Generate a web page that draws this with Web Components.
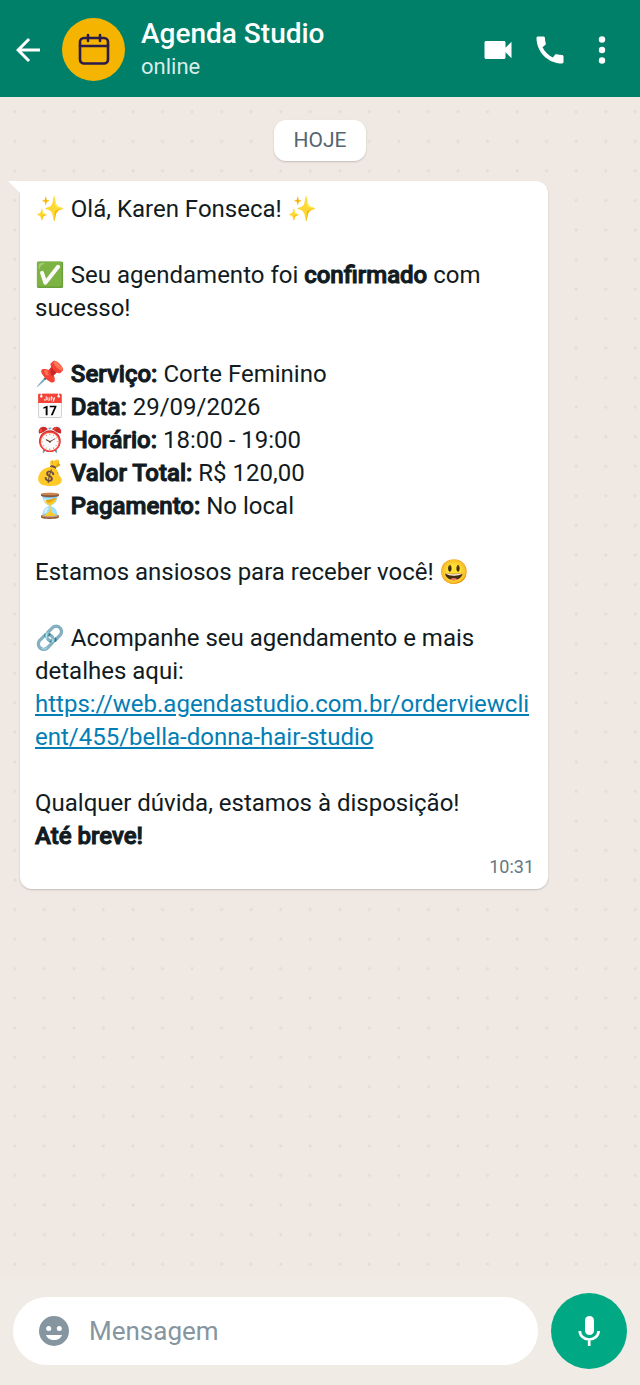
<!DOCTYPE html>
<html lang="pt-BR">
<head>
<meta charset="utf-8">
<meta name="viewport" content="width=device-width, initial-scale=1">
<title>Agenda Studio</title>
<style>
html, body { margin: 0; min-height: 100%; }
body { font-family: Roboto, "Noto Color Emoji", sans-serif; color: #111b21; background: #efeae2; }
chat-message a { color: #027eb5; text-decoration: underline; }
chat-message b { font-weight: 500; -webkit-text-stroke: 1px currentColor; }
</style>
</head>
<body>
<chat-app>
  <chat-header slot="header" name="Agenda Studio" status="online"></chat-header>
  <day-chip>HOJE</day-chip>
  <chat-message time="10:31">
    <p>✨ Olá, Karen Fonseca! ✨</p>
    <p>✅ Seu agendamento foi <b>confirmado</b> com sucesso!</p>
    <p>📌 <b>Serviço:</b> Corte Feminino<br>
    📅 <b>Data:</b> 29/09/2026<br>
    ⏰ <b>Horário:</b> 18:00 - 19:00<br>
    💰 <b>Valor Total:</b> R$ 120,00<br>
    ⏳ <b>Pagamento:</b> No local</p>
    <p>Estamos ansiosos para receber você! 😃</p>
    <p>🔗 Acompanhe seu agendamento e mais detalhes aqui:<br>
    <a href="https://web.agendastudio.com.br/orderviewclient/455/bella-donna-hair-studio">https://web.agendastudio.com.br/orderviewclient/455/bella-donna-hair-studio</a></p>
    <p>Qualquer dúvida, estamos à disposição!<br>
    <b>Até breve!</b></p>
  </chat-message>
  <chat-composer slot="footer"></chat-composer>
</chat-app>

<script>
function define(name, html, setup) {
  customElements.define(name, class extends HTMLElement {
    constructor() {
      super();
      this.attachShadow({ mode: "open" }).innerHTML = html;
    }
    connectedCallback() { if (setup) setup(this, this.shadowRoot); }
  });
}

define("chat-app", `
<style>
:host { display: flex; flex-direction: column; min-height: 100vh; }
main {
  --cell: 4.617vw;
  flex: 1; display: flex; flex-direction: column; align-items: flex-start;
  padding: 23px 20px; gap: 20px; background-color: #f0e9e3;
  background-image: radial-gradient(circle at center, #e0dcd6 1px, transparent 2px);
  background-size: var(--cell) var(--cell);
}
</style>
<slot name="header"></slot>
<main><slot></slot></main>
<slot name="footer"></slot>`);

define("chat-header", `
<style>
:host { display: block; }
header {
  display: flex; align-items: center; box-sizing: border-box; height: 97px;
  padding: 2px 20px 0 10px; background: #008069; color: #fff;
}
button { display: flex; align-items: center; justify-content: center; width: 36px; height: 48px; padding: 0; border: 0; background: none; color: inherit; }
.avatar { display: flex; align-items: center; justify-content: center; flex: none; width: 63px; height: 63px; margin: 0 16px; border-radius: 50%; background: #f5b400; }
.who { flex: 1; min-width: 0; }
h1 { margin: 0; font-size: 28px; line-height: 34px; font-weight: 500; }
.who p { margin: 0; font-size: 22px; line-height: 32px; color: #d9ece9; }
nav { display: flex; gap: 16px; }
svg { display: block; }
</style>
<header>
  <button aria-label="Voltar"><svg width="36" height="36" viewBox="0 0 24 24" fill="currentColor"><path d="M20 11H7.83l5.59-5.59L12 4l-8 8 8 8 1.41-1.41L7.83 13H20z"/></svg></button>
  <span class="avatar"><svg width="32" height="34" viewBox="0 0 32 34" fill="none" stroke="#2b1b4b" stroke-width="2.600" stroke-linecap="round" stroke-linejoin="round"><rect x="2" y="5" width="28" height="25.500" rx="4"/><path d="M2 13h28M10 2v6M22 2v6"/></svg></span>
  <div class="who"><h1></h1><p></p></div>
  <nav>
    <button aria-label="Chamada de vídeo"><svg width="36" height="36" viewBox="0 0 24 24" fill="currentColor"><path d="M17 10.500V7c0-.55-.45-1-1-1H4c-.55 0-1 .45-1 1v10c0 .55.45 1 1 1h12c.55 0 1-.45 1-1v-3.500l4 4v-11z"/></svg></button>
    <button aria-label="Chamada de voz"><svg width="36" height="36" viewBox="0 0 24 24" fill="currentColor"><path d="M20.010 15.380c-1.230 0-2.420-.2-3.530-.56-.35-.12-.74-.03-1.010.24l-1.570 1.970c-2.830-1.350-5.480-3.900-6.890-6.830l1.950-1.660c.27-.28.35-.67.24-1.020-.37-1.110-.56-2.300-.56-3.530 0-.54-.45-.99-.99-.99H4.190C3.650 3 3 3.240 3 3.990 3 13.280 10.730 21 20.010 21c.71 0 .99-.63.99-1.180v-3.450c0-.54-.45-.99-.99-.99z"/></svg></button>
    <button aria-label="Mais opções"><svg width="36" height="36" viewBox="0 0 36 36" fill="currentColor"><circle cx="18" cy="7.500" r="3.200"/><circle cx="18" cy="18" r="3.200"/><circle cx="18" cy="28.500" r="3.200"/></svg></button>
  </nav>
</header>`, (host, root) => {
  root.querySelector("h1").textContent = host.getAttribute("name");
  root.querySelector("p").textContent = host.getAttribute("status");
});

define("day-chip", `
<style>
:host { display: block; align-self: center; padding: 6px 20px; border-radius: 12px; background: #fff; color: #54656f; font-size: 21px; line-height: 29px; box-shadow: 0 1px 2px #0b141a33; }
</style><slot></slot>`);

define("chat-message", `
<style>
:host { display: block; position: relative; box-sizing: border-box; width: 88%; padding: 12px 14px 8px 15px; border-radius: 0 12px 12px 12px; background: #fff; box-shadow: 0 1px 2px #0b141a33; }
.tail { position: absolute; top: 0; left: -12px; width: 12px; height: 12px; background: #fff; clip-path: polygon(0 0, 100% 0, 100% 100%); }
.body { display: flex; flex-direction: column; gap: 33px; font-size: 24px; line-height: 33px; overflow-wrap: anywhere; }
::slotted(p) { margin: 0; }
time { display: block; text-align: right; font-size: 18px; line-height: 28px; color: #667781; }
</style>
<span class="tail"></span>
<div class="body"><slot></slot></div>
<time></time>`, (host, root) => {
  root.querySelector("time").textContent = host.getAttribute("time");
});

define("chat-composer", `
<style>
:host { display: block; background: #f0ebe4; }
form { display: flex; align-items: center; gap: 13px; padding: 16px 13px; }
label { flex: 1; min-width: 0; display: flex; align-items: center; gap: 17px; box-sizing: border-box; height: 68px; padding: 0 24px 0 23px; border-radius: 34px; background: #fff; }
svg { display: block; flex: none; }
input { flex: 1; min-width: 0; padding: 0; border: 0; outline: 0; background: none; font: 26px/34px Roboto, sans-serif; color: #111b21; }
input::placeholder { color: #8696a0; opacity: 1; }
button { display: flex; align-items: center; justify-content: center; flex: none; width: 76px; height: 76px; padding: 0; border: 0; border-radius: 50%; background: #00a884; color: #fff; }
</style>
<form>
  <label>
    <svg width="36" height="36" viewBox="0 0 36 36"><circle cx="18" cy="18" r="15" fill="#8696a0"/><circle cx="12.700" cy="15.500" r="2.500" fill="#fff"/><circle cx="23.300" cy="15.500" r="2.500" fill="#fff"/><path d="M10 22h16c-1 3-4 5-8 5s-7-2-8-5z" fill="#fff"/></svg>
    <input type="text" placeholder="Mensagem" aria-label="Mensagem">
  </label>
  <button type="button" aria-label="Gravar áudio"><svg width="36" height="36" viewBox="0 0 36 36"><rect x="14" y="3" width="9" height="19" rx="4.500" fill="currentColor"/><path d="M8.800 18a9.400 8.500 0 0 0 18.800 0M18.200 26v7" fill="none" stroke="currentColor" stroke-width="2.700"/></svg></button>
</form>`);
</script>
</body>
</html>
